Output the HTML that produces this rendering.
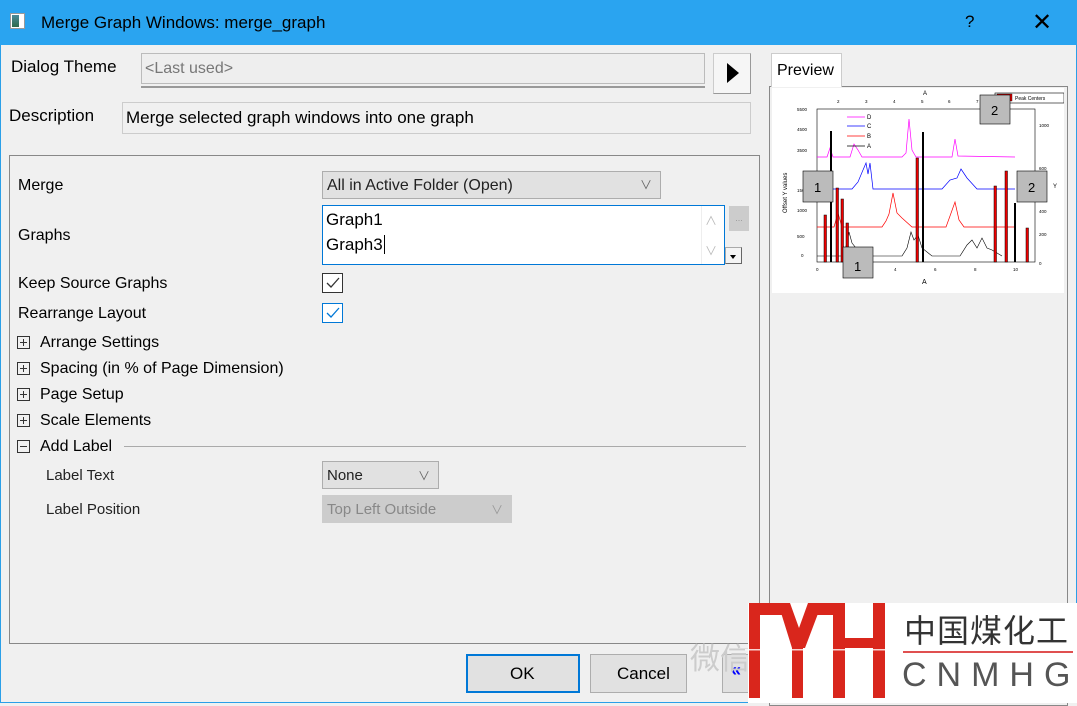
<!DOCTYPE html>
<html><head><meta charset="utf-8"><style>
*{margin:0;padding:0;box-sizing:border-box}
body{width:1077px;height:703px;background:#f0f0f0;font-family:"Liberation Sans","Noto Sans CJK SC",sans-serif;position:relative;overflow:hidden;color:#000}
.a{position:absolute}
.t{font-size:16px;white-space:nowrap}
.s{font-size:15px;white-space:nowrap;color:#222}
.pl{position:absolute;width:13px;height:13px;border:1px solid #333}
.pl:before{content:"";position:absolute;left:2px;right:2px;top:5px;height:1px;background:#333}
.pl.p:after{content:"";position:absolute;top:2px;bottom:2px;left:5px;width:1px;background:#333}
</style></head><body>
<div class="a" style="left:0;top:0;width:1077px;height:703px;border:1px solid #2a9fe8"></div>
<div class="a" style="left:0;top:0;width:1077px;height:45px;background:#2aa4f0"></div>
<div class="a" style="left:10px;top:13px;width:15px;height:16px;background:#fff;border:1px solid #999"><div style="position:absolute;left:1px;top:1px;width:7px;height:12px;background:linear-gradient(#4a8a9a,#2f6b4b)"></div></div>
<div class="a t" style="left:41px;top:13px;font-size:17px">Merge Graph Windows: merge_graph</div>
<div class="a t" style="left:965px;top:12px;font-size:17px">?</div>
<div class="a t" style="left:1032px;top:8px;font-size:24px;font-weight:300">✕</div>

<div class="a t" style="left:11px;top:57px;font-size:17px">Dialog Theme</div>
<div class="a" style="left:141px;top:53px;width:564px;height:31px;border:1px solid #bbb;background:#eee"></div>
<div class="a" style="left:141px;top:86px;width:564px;height:2px;border-top:1px solid #999;border-bottom:1px solid #999"></div>
<div class="a t" style="left:145px;top:60px;color:#777">&lt;Last used&gt;</div>
<div class="a" style="left:713px;top:53px;width:38px;height:41px;background:#f6f6f6;border:1px solid #ccc;border-right-color:#999;border-bottom-color:#999"></div>
<div class="a" style="left:727px;top:63px;width:0;height:0;border-top:10px solid transparent;border-bottom:10px solid transparent;border-left:12px solid #000"></div>
<div class="a t" style="left:9px;top:106px;font-size:17px">Description</div>
<div class="a" style="left:122px;top:102px;width:629px;height:32px;border:1px solid #ccc"></div>
<div class="a t" style="left:126px;top:108px;font-size:17px">Merge selected graph windows into one graph</div>

<div class="a" style="left:9px;top:155px;width:751px;height:489px;border:1px solid #888"></div>
<div class="a t" style="left:18px;top:177px">Merge</div>
<div class="a" style="left:322px;top:171px;width:339px;height:28px;border:1px solid #adadad;background:#e1e1e1"></div>
<div class="a t" style="left:327px;top:177px;color:#222">All in Active Folder (Open)</div>
<div class="a s" style="left:640px;top:176px;color:#666;font-size:12px">∨</div>
<div class="a t" style="left:18px;top:227px">Graphs</div>
<div class="a" style="left:322px;top:205px;width:403px;height:60px;border:1px solid #0078d7;background:#fff"></div>
<div class="a" style="left:701px;top:206px;width:1px;height:58px;background:#eee"></div>
<div class="a t" style="left:326px;top:210px;font-size:17px">Graph1</div>
<div class="a t" style="left:326px;top:235px;font-size:17px">Graph3<span style="border-left:1px solid #000;margin-left:1px"></span></div>
<div class="a" style="left:705px;top:212px;color:#bbb;font-size:12px">∧</div>
<div class="a" style="left:705px;top:242px;color:#bbb;font-size:12px">∨</div>
<div class="a" style="left:729px;top:206px;width:20px;height:25px;background:#ccc;border:1px solid #ccc;color:#999;font-size:9px;text-align:center;line-height:22px">...</div>
<div class="a" style="left:725px;top:247px;width:17px;height:17px;background:#f4f4f4;border:1px solid #aaa;border-right-color:#666;border-bottom-color:#666"><div style="position:absolute;left:4px;top:7px;border-left:3px solid transparent;border-right:3px solid transparent;border-top:4px solid #000"></div></div>

<div class="a t" style="left:18px;top:275px">Keep Source Graphs</div>
<div class="a" style="left:322px;top:273px;width:21px;height:20px;border:1px solid #333;background:#fff"></div>
<svg class="a" style="left:322px;top:273px" width="21" height="20"><path d="M5 10l4 4 8-9" stroke="#333" stroke-width="1.3" fill="none"/></svg>
<div class="a t" style="left:18px;top:305px">Rearrange Layout</div>
<div class="a" style="left:322px;top:303px;width:21px;height:20px;border:1px solid #0078d7;background:#fff"></div>
<svg class="a" style="left:322px;top:303px" width="21" height="20"><path d="M5 10l4 4 8-9" stroke="#0078d7" stroke-width="1.3" fill="none"/></svg>

<div class="pl p" style="left:17px;top:336px"></div><div class="a t" style="left:40px;top:334px">Arrange Settings</div>
<div class="pl p" style="left:17px;top:362px"></div><div class="a t" style="left:40px;top:360px">Spacing (in % of Page Dimension)</div>
<div class="pl p" style="left:17px;top:388px"></div><div class="a t" style="left:40px;top:386px">Page Setup</div>
<div class="pl p" style="left:17px;top:414px"></div><div class="a t" style="left:40px;top:412px">Scale Elements</div>
<div class="pl" style="left:17px;top:440px"></div><div class="a t" style="left:40px;top:438px">Add Label</div>
<div class="a" style="left:124px;top:446px;width:622px;height:1px;background:#aaa"></div>
<div class="a s" style="left:46px;top:467px">Label Text</div>
<div class="a" style="left:322px;top:461px;width:117px;height:28px;border:1px solid #adadad;background:#e1e1e1"></div>
<div class="a s" style="left:327px;top:467px">None</div>
<div class="a" style="left:418px;top:467px;color:#666;font-size:12px">∨</div>
<div class="a s" style="left:46px;top:501px">Label Position</div>
<div class="a" style="left:322px;top:495px;width:190px;height:28px;border:1px solid #ccc;background:#ccc"></div>
<div class="a s" style="left:327px;top:501px;color:#888">Top Left Outside</div>
<div class="a" style="left:491px;top:501px;color:#999;font-size:12px">∨</div>

<div class="a" style="left:769px;top:86px;width:299px;height:620px;border:1px solid #888;background:#f0f0f0"></div>
<div class="a" style="left:771px;top:53px;width:71px;height:34px;border:1px solid #ccc;border-bottom:none;background:#fff"></div>
<div class="a t" style="left:777px;top:62px">Preview</div>
<div class="a" style="left:772px;top:88px;width:292px;height:205px;background:#fff"></div>
<svg class="a" style="left:772px;top:88px" width="292" height="205" font-family="Liberation Sans" font-size="5">
<rect x="45" y="21" width="218" height="153" fill="none" stroke="#000" stroke-width=".6"/>
<text x="151" y="7" font-size="6">A</text>
<g font-size="4.5"><text x="65" y="15">2</text><text x="93" y="15">3</text><text x="121" y="15">4</text><text x="149" y="15">5</text><text x="176" y="15">6</text><text x="204" y="15">7</text>
<text x="44" y="183">0</text><text x="83" y="183">2</text><text x="122" y="183">4</text><text x="162" y="183">6</text><text x="202" y="183">8</text><text x="241" y="183">10</text>
<text x="25" y="23">5500</text><text x="25" y="43">4500</text><text x="25" y="64">3500</text><text x="25" y="104">1500</text><text x="25" y="124">1000</text><text x="25" y="150">500</text><text x="29" y="169">0</text>
<text x="267" y="39">1000</text><text x="267" y="82">600</text><text x="267" y="125">400</text><text x="267" y="148">200</text><text x="267" y="177">0</text></g>
<polyline points="45,69 55,69 58,60 61,69 78,69 82,56 86,62 90,69 130,69 134,65 137,31 140,62 144,69 180,69 183,51 186,68 243,69" stroke="#f0f" fill="none" stroke-width=".7"/>
<polyline points="45,101 80,101 86,94 91,82 94,75 96,86 98,75 101,101 170,101 178,92 185,90 189,81 195,90 205,101 243,101" stroke="#00f" fill="none" stroke-width=".7"/>
<polyline points="45,139 62,139 66,125 70,139 110,139 114,133 117,126 121,105 125,125 130,130 140,139 174,139 178,128 183,114 187,132 192,139 243,139" stroke="#f00" fill="none" stroke-width=".7"/>
<polyline points="45,168 72,168 77,144 80,155 84,160 90,166 100,168 130,168 135,160 139,144 142,152 146,147 150,160 160,168 188,168 195,157 200,152 205,160 210,150 215,160 220,162 230,168" stroke="#000" fill="none" stroke-width=".6"/>
<g fill="#000"><rect x="58" y="43" width="2" height="131"/><rect x="150" y="44" width="2" height="130"/><rect x="242" y="115" width="2" height="59"/></g>
<g fill="#e00" stroke="#000" stroke-width=".5"><rect x="52" y="127" width="2.5" height="47"/><rect x="64" y="100" width="2.5" height="74"/><rect x="69" y="111" width="2.5" height="63"/><rect x="74" y="135" width="2.5" height="39"/><rect x="144" y="70" width="2.5" height="104"/><rect x="222" y="98" width="2.5" height="76"/><rect x="233" y="83" width="2.5" height="91"/><rect x="254" y="140" width="2.5" height="34"/></g>
<g stroke-width=".8"><line x1="75" y1="29" x2="93" y2="29" stroke="#f0f"/><line x1="75" y1="38" x2="93" y2="38" stroke="#00f"/><line x1="75" y1="48" x2="93" y2="48" stroke="#f00"/><line x1="75" y1="58" x2="93" y2="58" stroke="#000"/></g>
<g font-size="6"><text x="95" y="31">D</text><text x="95" y="40">C</text><text x="95" y="50">B</text><text x="95" y="60">A</text></g>
<text x="15" y="125" transform="rotate(-90 15 125)" font-size="6">Offset Y values</text>
<text x="150" y="196" font-size="7">A</text>
<text x="281" y="100" font-size="6">Y</text>
<rect x="223" y="5" width="69" height="10" fill="#fff" stroke="#000" stroke-width=".6"/><rect x="225" y="6" width="15" height="7" fill="#e00" stroke="#000" stroke-width=".4"/><text x="243" y="12">Peak Centers</text>
<g fill="#bbb" stroke="#000" stroke-width=".6"><rect x="31" y="83" width="30" height="31"/><rect x="208" y="7" width="30" height="29"/><rect x="245" y="83" width="30" height="31"/><rect x="71" y="159" width="30" height="31"/></g>
<g font-size="13"><text x="42" y="104">1</text><text x="219" y="27">2</text><text x="256" y="104">2</text><text x="82" y="183">1</text></g>
</svg>

<div class="a" style="left:466px;top:654px;width:114px;height:39px;border:2px solid #0078d7;background:#e1e1e1"></div>
<div class="a t" style="left:510px;top:664px;font-size:17px">OK</div>
<div class="a" style="left:590px;top:654px;width:97px;height:39px;border:1px solid #adadad;background:#e1e1e1"></div>
<div class="a t" style="left:617px;top:664px;font-size:17px">Cancel</div>
<div class="a" style="left:722px;top:654px;width:30px;height:39px;border:1px solid #adadad;background:#e1e1e1"></div>
<div class="a t" style="left:731px;top:660px;color:#00f;font-size:18px;font-weight:bold">«</div>
<div class="a t" style="left:690px;top:634px;font-size:30px;color:#ccc">微信</div>

<div class="a" style="left:748px;top:603px;width:329px;height:100px;background:#fff"></div>
<svg class="a" style="left:745px;top:598px" width="150" height="105"><g fill="#d9261c">
<rect x="4" y="5" width="11" height="95"/>
<rect x="4" y="5" width="38" height="12"/>
<polygon points="33,5 45,5 54,30 63,5 77,5 60,50 47,50"/>
<rect x="70" y="5" width="30" height="12"/>
<rect x="47" y="50" width="11" height="50"/>
<rect x="88" y="5" width="12" height="95"/>
<rect x="128" y="5" width="12" height="95"/>
<rect x="88" y="40" width="52" height="10"/>
</g><rect x="0" y="51" width="150" height="1.5" fill="#fff" opacity=".8"/></svg>
<div class="a" style="left:904px;top:606px;font-size:32px;color:#333;letter-spacing:1px;font-family:'Noto Sans CJK SC',sans-serif;white-space:nowrap">中国煤化工</div>
<div class="a" style="left:903px;top:651px;width:170px;height:2px;background:#e05050"></div>
<div class="a" style="left:902px;top:656px;font-size:34px;color:#555;letter-spacing:10px;white-space:nowrap">CNMHG</div>
</body></html>
